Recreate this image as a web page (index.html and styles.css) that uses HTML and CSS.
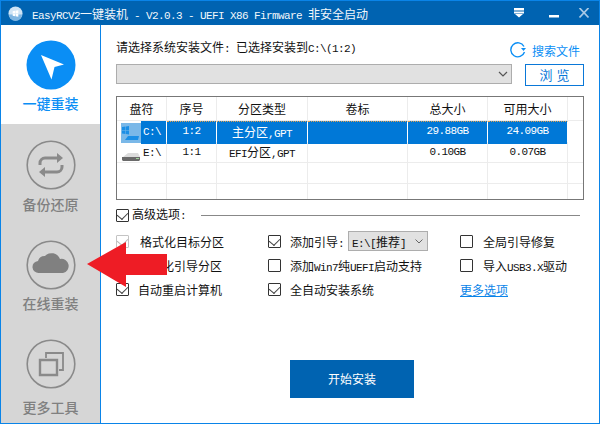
FILE: index.html
```html
<!DOCTYPE html>
<html lang="zh">
<head>
<meta charset="utf-8">
<title>EasyRCV2</title>
<link rel="stylesheet" href="styles.css">
</head>
<body>
<div class="window">
  <header class="titlebar">
    <svg class="logo" viewBox="0 0 16 16"><circle cx="8" cy="8" r="7.500" fill="#cfe4f5"/><path d="M1 9h14a7 7 0 0 1-14 0z" fill="#7fb6e2"/><path d="M5 5.500l2.500-.4V8H5zM8 5l3-.5V8H8zM5 8.400h2.500v2.500L5 10.500zM8 8.400h3v3L8 11z" fill="#fff"/></svg>
    <div class="title"><span class="m">EasyRCV2</span>一键装机<span class="m"> - V2.0.3 - UEFI X86 Firmware </span>非安全启动</div>
    <div class="winbtns">
      <svg class="wb" width="12" height="12" viewBox="0 0 12 12"><path d="M1 0h10v2.500H1zM1 3.500h10v2H1zM2 6h8L6 9.500z" fill="#fff"/></svg>
      <svg class="wb" width="12" height="12" viewBox="0 0 12 12"><path d="M1 7h10v2.500H1z" fill="#fff"/></svg>
      <svg class="wb close" width="12" height="12" viewBox="0 0 12 12"><path d="M1.500 0l9 9.500M10.500 0l-9 9.500" stroke="#a9c9e6" stroke-width="1.800" fill="none"/></svg>
    </div>
  </header>
  <div class="body">
    <nav class="side">
      <div class="nav active">
        <svg class="navicon" viewBox="0 0 50 50"><circle cx="25" cy="25" r="24.500" fill="#0a8ef5"/><path d="M15 15l23 9.500-9.500 2.500-3 12.500z" fill="#fff"/></svg>
        <span>一键重装</span>
      </div>
      <div class="nav">
        <svg class="navicon" viewBox="0 0 50 50"><circle cx="25" cy="25" r="23.800" fill="none" stroke="#8a8a8a" stroke-width="1.600"/><path d="M14 25v-2a5 5 0 0 1 5-5h14" fill="none" stroke="#8a8a8a" stroke-width="3"/><path d="M31 13l6 5-6 5z" fill="#8a8a8a"/><path d="M36 25v2a5 5 0 0 1-5 5H17" fill="none" stroke="#8a8a8a" stroke-width="3"/><path d="M19 27l-6 5 6 5z" fill="#8a8a8a"/></svg>
        <span>备份还原</span>
      </div>
      <div class="nav">
        <svg class="navicon" viewBox="0 0 50 50"><circle cx="25" cy="25" r="23.800" fill="none" stroke="#8a8a8a" stroke-width="1.600"/><path d="M13 33a6 6 0 0 1-1-12 7 7 0 0 1 7-5 9 9 0 0 1 15 3 7 7 0 0 1 3 14z" fill="#808080"/></svg>
        <span>在线重装</span>
      </div>
      <div class="nav">
        <svg class="navicon" viewBox="0 0 50 50"><circle cx="25" cy="25" r="23.800" fill="none" stroke="#8a8a8a" stroke-width="1.600"/><path d="M14 21h17v15H14z" fill="none" stroke="#8a8a8a" stroke-width="2.400"/><path d="M20 19v-5h17v17h-4" fill="none" stroke="#8a8a8a" stroke-width="1.800"/></svg>
        <span>更多工具</span>
      </div>
    </nav>
    <main class="content">
      <div class="toprow">
        <div class="prompt">请选择系统安装文件<span class="m">: </span>已选择安装到<span class="m">C:\(1:2)</span></div>
        <div class="search">
          <svg width="16" height="16" viewBox="0 0 16 16"><path d="M14 4.500A7 7 0 1 0 14.500 10" fill="none" stroke="#0a8ef5" stroke-width="1.400"/><path d="M11 6h5l-2.500 3z" fill="#0a8ef5"/></svg>
          <span>搜索文件</span>
        </div>
      </div>
      <div class="filerow">
        <div class="select"><svg width="10" height="6" viewBox="0 0 10 6"><path d="M1 1l4 4 4-4" fill="none" stroke="#555" stroke-width="1.200"/></svg></div>
        <div class="browse">浏 览</div>
      </div>
      <div class="table">
        <div class="row head"><div>盘符</div><div>序号</div><div>分区类型</div><div>卷标</div><div>总大小</div><div>可用大小</div><div></div></div>
        <div class="row sel">
          <div class="disk">
            <svg class="win" width="20" height="20" viewBox="0 0 20 20"><rect width="20" height="20" fill="#7ab8e8"/><path d="M1 4l3.500-.5V7H1zM5 3.400l3-.4V7H5zM1 7.500h3.500V11L1 10.500zM5 7.500h3v4L5 11zM4 17l3-4h11l-1 4z" fill="#1b8fe6"/></svg>
            <span class="m">C:\</span></div>
          <div class="m">1:2</div><div>主分区<span class="m">,GPT</span></div><div></div><div class="m">29.88GB</div><div class="m">24.09GB</div><div class="gap"></div>
        </div>
        <div class="row">
          <div class="disk">
            <svg class="win" width="20" height="20" viewBox="0 0 20 20"><path d="M2 14l5-4h10l2 4z" fill="#dcdcdc"/><path d="M1 14h18v3l-1 1H2l-1-1z" fill="#6a6a6a"/><path d="M15 15h3v1h-3z" fill="#9fd39a"/></svg>
            <span class="m">E:\</span></div>
          <div class="m">1:1</div><div><span class="m">EFI</span>分区<span class="m">,GPT</span></div><div></div><div class="m">0.10GB</div><div class="m">0.07GB</div><div></div>
        </div>
        <div class="row"><div></div><div></div><div></div><div></div><div></div><div></div><div></div></div>
        <div class="row last"><div></div><div></div><div></div><div></div><div></div><div></div><div></div></div>
      </div>
      <div class="advanced">
        <span class="cb on"></span><span class="advlabel">高级选项<span class="m">:</span></span><span class="rule"></span>
      </div>
      <div class="options">
        <label class="opt"><span class="cb on dim"></span><span class="ind">格式化目标分区</span></label>
        <label class="opt"><span class="cb on"></span><span class="lb">添加引导<span class="m">:</span></span><span class="mini"><span><span class="m">E:\[</span>推荐<span class="m">]</span></span><svg width="8" height="5" viewBox="0 0 8 5"><path d="M.5.500L4 4 7.500.500" fill="none" stroke="#666"/></svg></span></label>
        <label class="opt"><span class="cb"></span><span class="lb wide">全局引导修复</span></label>
        <label class="opt"><span class="cb on dim"></span><span class="lb">格式化引导分区</span></label>
        <label class="opt"><span class="cb"></span><span class="lb">添加<span class="m">Win7</span>纯<span class="m">UEFI</span>启动支持</span></label>
        <label class="opt"><span class="cb"></span><span class="lb wide">导入<span class="m">USB3.X</span>驱动</span></label>
        <label class="opt"><span class="cb on"></span><span class="lb">自动重启计算机</span></label>
        <label class="opt"><span class="cb on"></span><span class="lb">全自动安装系统</span></label>
        <a class="more">更多选项</a>
      </div>
      <div class="actions"><div class="start">开始安装</div></div>
    </main>
  </div>
  <svg class="arrow" width="80" height="46" viewBox="0 0 80 46"><path d="M0 22L39 0v12h41v21H39v12z" fill="#ee1c25"/></svg>
</div>
</body>
</html>
```
FILE: styles.css
```css
* { box-sizing: border-box; }
html, body { margin: 0; padding: 0; }
body { width: 600px; height: 424px; overflow: hidden; background: #fff; font-family: "Noto Sans CJK SC", sans-serif; font-size: 12px; color: #111; }
.m { font-family: "Liberation Mono", monospace; font-size: 11px; letter-spacing: -.6px; }
.window { position: relative; width: 600px; height: 424px; border: 1px solid #0a84e8; display: flex; flex-direction: column; }
.titlebar { height: 24px; background: #0063b1; color: #fff; display: flex; align-items: center; flex: none; }
.logo { width: 15px; height: 15px; margin-left: 7px; flex: none; }
.title { margin-left: 9px; flex: 1; white-space: pre; opacity: .95; }
.winbtns { display: flex; gap: 23px; margin-right: 9px; padding-top: 2px; }
.close { margin-left: -5px; }
.body { flex: 1; display: flex; min-height: 0; }
.side { width: 100px; flex: none; background: #d6d6d6; border-right: 1px solid #0a84e8; display: flex; flex-direction: column; overflow: hidden; }
.nav { height: 100px; flex: none; display: flex; flex-direction: column; align-items: center; padding-top: 16px; color: #808080; font-size: 14px; font-weight: 500; line-height: 18px; }
.nav.active { height: 99px; padding-top: 15px; background: #fff; color: #0a8ef5; }
.nav span { margin-top: 4px; }
.nav:nth-child(2) span { margin-top: 5px; }
.nav:last-child { padding-top: 15px; }
.nav:last-child span { margin-top: 9px; }
.navicon { width: 50px; height: 50px; flex: none; }
.content { flex: 1; padding: 0 15px; display: flex; flex-direction: column; }
.toprow { display: flex; justify-content: space-between; align-items: center; height: 36px; padding: 6px 4px 0 0; }
.search { display: flex; align-items: center; gap: 6px; color: #0a8ef5; margin-top: 8px; }
.filerow { display: flex; gap: 13px; align-items: flex-start; margin-top: 3px; }
.select { width: 396px; height: 20px; background: #e1e1e1; border: 1px solid #adadad; display: flex; align-items: center; justify-content: flex-end; padding-right: 3px; }
.browse { width: 59px; height: 22px; border: 1px solid #0a78d8; color: #0a78d8; font-size: 13px; word-spacing: 1px; text-align: center; line-height: 20px; }
.table { margin-top: 10px; width: 468px; height: 104px; border: 1px solid #777; overflow: hidden; flex: none; }
.row { display: grid; grid-template-columns: 50px 50px 91px 100px 80px 80px 1fr; height: 21px; border-bottom: 1px solid #ececec; text-align: center; line-height: 20px; }
.row > div { border-right: 1px solid #ececec; height: 100%; white-space: pre; }
.row > div:last-child { border-right: 0; }
.head { height: 24px; line-height: 23px; }
.sel { color: #fff; line-height: 19px; border-bottom-color: #ececec; }
.sel > div { background: #0078d7; border-right-color: #fff; border-top: 1px dotted #e0a050; }
.sel > .gap { background: #fff; border-top: 0; }
.sel > .disk { background: linear-gradient(#0078d7, #0078d7) 24px 0 / 100% 100% no-repeat #fff; border-top: 0; }
.disk { display: flex; align-items: center; padding-left: 4px; gap: 2px; }
.win { flex: none; }
.last { border-bottom: 0; }
.advanced { margin-top: 7px; height: 16px; display: flex; align-items: center; gap: 3px; flex: none; line-height: 16px; }
.advlabel { white-space: nowrap; }
.rule { flex: 1; height: 1px; background: #888; margin: 0 4px 0 12px; }
.cb { display: inline-block; position: relative; width: 13px; height: 13px; border: 1px solid #333; border-radius: 1px; flex: none; }
.cb.on::after { content: ""; position: absolute; left: 2px; top: 0; width: 6px; height: 8px; border-right: 1px solid #444; border-bottom: 1px solid #444; transform: rotate(40deg) skew(-5deg); }
.cb.dim { border-color: #c4c4c4; }
.cb.dim::after { border-color: #bbb; }
.options { display: grid; grid-template-columns: 152px 192px 1fr; grid-auto-rows: 24px; margin-top: 6px; flex: none; }
.opt { display: flex; align-items: center; white-space: pre; }
.lb { margin-left: 9px; }
.lb.wide { margin-left: 10px; }
.ind { margin-left: 11px; }
.mini { display: inline-flex; align-items: center; justify-content: space-between; width: 80px; height: 20px; margin-left: 4px; padding: 0 4px 0 3px; background: #e1e1e1; border: 1px solid #adadad; }
.more { color: #0a84e8; text-decoration: underline; align-self: center; }
.actions { padding-left: 174px; margin-top: 59px; }
.start { width: 124px; height: 38px; background: #0063b1; color: #fff; text-align: center; line-height: 37px; }
.arrow { position: absolute; left: 86px; top: 241px; }
```
